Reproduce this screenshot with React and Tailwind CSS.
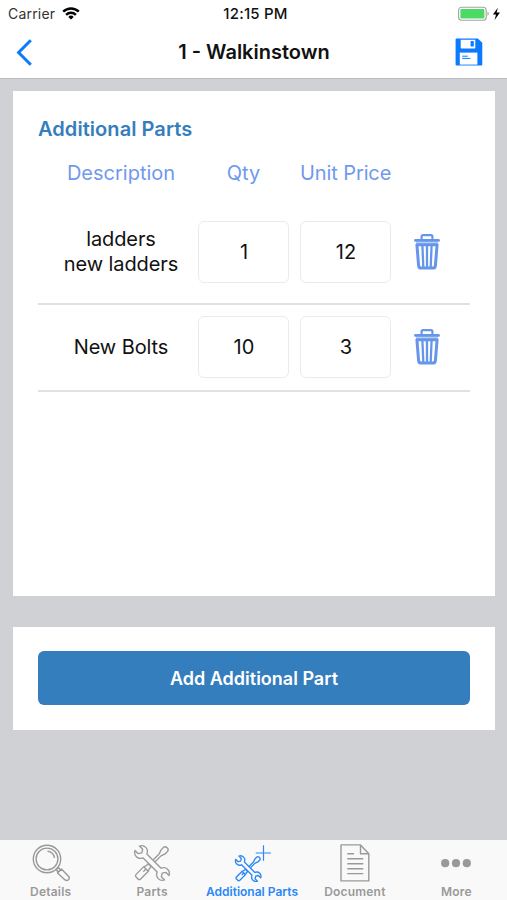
import { useState } from 'react'

const PARTS = [
  { id: 1, description: ['ladders', 'new ladders'], qty: '1', price: '12' },
  { id: 2, description: ['New Bolts'], qty: '10', price: '3' },
]

// status bar icons
function WifiIcon() {
  return (
    <svg width="18" height="13" viewBox="0 0 18 13" fill="none" stroke="#000" strokeWidth="2.4">
      <path d="M1.2 4.6a11.2 11.2 0 0 1 15.6 0" />
      <path d="M4.1 7.8a7 7 0 0 1 9.8 0" />
      <path d="M9 12.6 6.3 9.9a3.9 3.9 0 0 1 5.4 0z" fill="#000" stroke="none" />
    </svg>
  )
}

function BatteryIcon() {
  return (
    <svg width="44" height="16" viewBox="0 0 44 16">
      <rect x="0.6" y="1.2" width="27.6" height="13" rx="3" fill="#fff" stroke="#a3a3a3" strokeWidth="1.1" />
      <rect x="2.4" y="3" width="24" height="9.4" rx="1" fill="#4cd964" />
      <path d="M29.5 5.6c1.6.5 1.6 3.9 0 4.4z" fill="#a3a3a3" />
      <path d="M39.9 1.8 34.9 8.6h3.1l-1.4 5.3 5.4-7.3h-3.4z" fill="#000" />
    </svg>
  )
}

function SaveIcon() {
  return (
    <svg width="28" height="28" viewBox="0 0 28 28">
      <path d="M1.6.4h21.2l4.5 4.4v21.6q0 1-1 1H1.6q-1 0-1-1V1.4q0-1 1-1z" fill="#0a7aff" />
      <path d="M5.7 1.7h14.6v7.7q0 1.2-1.2 1.2H6.9q-1.2 0-1.2-1.2z" fill="#fff" />
      <rect x="15.6" y="2.9" width="3.2" height="5.6" rx="0.6" fill="#0a7aff" />
      <path d="M4.8 14.6h17.6v12H4.8z" fill="#fff" />
      <path d="M7.2 18.2h5.6M7.2 20.4h8.2" stroke="#0a7aff" strokeWidth="1" />
    </svg>
  )
}

function TrashIcon() {
  return (
    <svg width="26" height="36" viewBox="0 0 26 36" fill="none" stroke="#6596eb">
      <path d="M7.6 5.3V2.6q0-1.4 1.4-1.4h8q1.4 0 1.4 1.4v2.7" strokeWidth="2.2" />
      <path d="M2 7h22v3H2z" fill="#b9cff7" stroke="none" />
      <path d="M1.5 6.4h23" strokeWidth="2.8" strokeLinecap="round" />
      <path d="M2.9 10.7h20.2l-1.7 20.9q-.2 2.5-2.8 2.5H7.4q-2.6 0-2.8-2.5z" fill="#fff" strokeWidth="3" strokeLinejoin="round" />
      <path d="M8.4 11.5 9.3 33M13 11.5V33M17.6 11.5 16.7 33" strokeWidth="2.3" />
    </svg>
  )
}

// tab bar icons
function ToolsShape({ strokeWidth = 1.4 }) {
  return (
    <g fill="#f9f9f9" stroke="currentColor" strokeWidth={strokeWidth} strokeLinejoin="round">
      {/* screwdriver */}
      <g transform="rotate(45)">
        <path d="M-1.4 3V-12L-3 -16.5V-20Q-3 -22.6 0 -22.6T3 -20V-16.5L1.4 -12V3z" />
        <path d="M-2.3 3.4H2.3V6.6L3.4 8.8V20.3Q3.4 22.3 1.4 22.3H-1.4Q-3.4 22.3 -3.4 20.3V8.8L-2.3 6.6z" />
        <path d="M-3 9H3M0 9V13" />
      </g>
      {/* wrench */}
      <g transform="rotate(-45)">
        <path d="M-2.9 -10.6C-8.4 -12.8 -8.2 -19.6 -3.3 -22V-17.2L0 -15.2L3.3 -17.2V-22C8.2 -19.6 8.4 -12.8 2.9 -10.6V10.6C8.4 12.8 8.2 19.6 3.3 22V17.2L0 15.2L-3.3 17.2V22C-8.2 19.6 -8.4 12.8 -2.9 10.6z" />
      </g>
    </g>
  )
}

function DetailsIcon() {
  return (
    <svg width="38" height="38" viewBox="0 0 38 38" fill="none" stroke="currentColor" strokeWidth="1.4">
      <circle cx="15" cy="15" r="13.7" />
      <circle cx="15" cy="15" r="10.9" />
      <path d="M15.5 7.3a8 8 0 0 1 7 6.6" />
      <path d="m24.1 25.8 2.2-2.2 2.1 2.2-2.1 2.1z" />
      <path d="m25.5 29 4-4 7.2 7.4q1.3 1.7-.3 3.3-1.6 1.5-3.3.2z" strokeLinejoin="round" />
    </svg>
  )
}

function PartsIcon() {
  return (
    <svg width="38" height="38" viewBox="-20 -20 40 40">
      <ToolsShape />
    </svg>
  )
}

function AdditionalPartsIcon() {
  return (
    <svg width="38" height="38" viewBox="0 0 38 38" fill="none" stroke="currentColor">
      <g transform="translate(15.2 24.6) scale(0.7)">
        <ToolsShape strokeWidth={1.9} />
      </g>
      <path d="M30.5 1.2v15.5M22.7 9h15.3" strokeWidth="1.2" />
    </svg>
  )
}

function DocumentIcon() {
  return (
    <svg width="30" height="38" viewBox="0 0 30 38" fill="none" stroke="currentColor" strokeWidth="1.4">
      <path d="M1 .9h19.5l8.3 8.9v27.1H1zM20.5.9v8.9h8.3" strokeLinejoin="round" />
      <path d="M7.3 9.8H14M7.3 14.8h16M7.3 19.8h16M7.3 24.8h16M7.3 29.6h16" />
    </svg>
  )
}

function MoreIcon() {
  return (
    <svg width="30" height="38" viewBox="0 0 30 38" fill="currentColor">
      <circle cx="4.2" cy="19.2" r="4.1" />
      <circle cx="15" cy="19.2" r="4.1" />
      <circle cx="25.8" cy="19.2" r="4.1" />
    </svg>
  )
}

const TABS = [
  { label: 'Details', icon: DetailsIcon },
  { label: 'Parts', icon: PartsIcon },
  { label: 'Additional Parts', icon: AdditionalPartsIcon },
  { label: 'Document', icon: DocumentIcon },
  { label: 'More', icon: MoreIcon },
]

function NumberField({ value, onChange }) {
  return (
    <input
      value={value}
      onChange={(e) => onChange(e.target.value)}
      className="h-[62px] w-[91px] rounded-md border border-[#ebebeb] bg-white pl-px text-center text-[20px] outline-none"
    />
  )
}

function App() {
  const [parts, setParts] = useState(PARTS)
  const [activeTab, setActiveTab] = useState('Additional Parts')

  const update = (id, field, value) =>
    setParts(parts.map((p) => (p.id === id ? { ...p, [field]: value } : p)))

  const addPart = () =>
    setParts([...parts, { id: Date.now(), description: ['New Part'], qty: '1', price: '0' }])

  return (
    <div className="flex h-[900px] w-[507px] flex-col overflow-hidden bg-[#cfd1d4] font-['Inter',sans-serif] text-[#111]">
      {/* header */}
      <header className="h-[79px] shrink-0 border-b border-[#b9babd] bg-white">
        <div className="grid h-[27px] grid-cols-3 items-center pr-[5px] pl-2 text-[14px]">
          <div className="flex items-center gap-[7px]">
            <span className="tracking-[0.2px] text-[#333]">Carrier</span>
            <WifiIcon />
          </div>
          <span className="pt-0.5 pl-px text-center text-[15px] font-medium tracking-[0.2px]">12:15 PM</span>
          <div className="flex justify-end">
            <BatteryIcon />
          </div>
        </div>
        <div className="flex h-[50px] items-center justify-between pr-6 pl-4">
          <button aria-label="Back">
            <svg width="28" height="27" viewBox="0 0 28 27" fill="none" stroke="#0a7aff" strokeWidth="3">
              <path d="M14.8 1.2 2.6 13.5l12.2 12.3" />
            </svg>
          </button>
          <h1 className="pl-[9px] text-[20px] font-semibold">1 - Walkinstown</h1>
          <button aria-label="Save">
            <SaveIcon />
          </button>
        </div>
      </header>

      <main className="flex-1 px-[13px] pt-3">
        <section className="mr-[-1px] h-[505px] bg-white px-[25px] pt-6">
          <h2 className="text-[20px] leading-7 font-semibold tracking-[0.06px] text-[#357ebd]">Additional Parts</h2>
          <div className="mt-4 grid grid-cols-[149px_91px_91px_50px] gap-x-[11px] text-[20px] leading-7 text-[#7199ec]">
            <span className="pl-[17px] text-center">Description</span>
            <span className="text-center">Qty</span>
            <span className="text-center tracking-[-0.1px] whitespace-nowrap">Unit Price</span>
          </div>

          <div className="mt-[22px]">
            {parts.map((part) => (
              <div
                key={part.id}
                className="grid grid-cols-[149px_91px_91px_50px] items-center gap-x-[11px] border-b-2 border-[#e0e1e3] pt-[11px] pb-3 first:pt-3 first:pb-[20px]"
              >
                <div className="pl-[17px] text-center text-[20px] leading-[25px] tracking-[-0.1px]">
                  {part.description.map((line) => (
                    <p key={line}>{line}</p>
                  ))}
                </div>
                <NumberField value={part.qty} onChange={(v) => update(part.id, 'qty', v)} />
                <NumberField value={part.price} onChange={(v) => update(part.id, 'price', v)} />
                <button
                  aria-label="Delete"
                  className="flex justify-center"
                  onClick={() => setParts(parts.filter((p) => p.id !== part.id))}
                >
                  <TrashIcon />
                </button>
              </div>
            ))}
          </div>
        </section>

        <section className="mt-[31px] mr-[-1px] h-[103px] bg-white px-[25px] pt-6">
          <button
            onClick={addPart}
            className="h-[54px] w-full rounded-md bg-[#357ebd] pt-px text-[18px] font-semibold text-white"
          >
            Add Additional Part
          </button>
        </section>
      </main>

      {/* bottom tabs */}
      <nav className="grid h-[60px] shrink-0 grid-cols-5 bg-[#f9f9f9] pt-1">
        {TABS.map(({ label, icon: Icon }) => (
          <button
            key={label}
            onClick={() => setActiveTab(label)}
            className={`flex flex-col items-center text-[12px] font-semibold whitespace-nowrap ${
              activeTab === label ? 'pr-[3px] text-[#2a87f5]' : 'tracking-[0.2px] text-[#999]'
            }`}
          >
            <Icon />
            <span className="pt-px leading-[18px]">{label}</span>
          </button>
        ))}
      </nav>
    </div>
  )
}

export default App
